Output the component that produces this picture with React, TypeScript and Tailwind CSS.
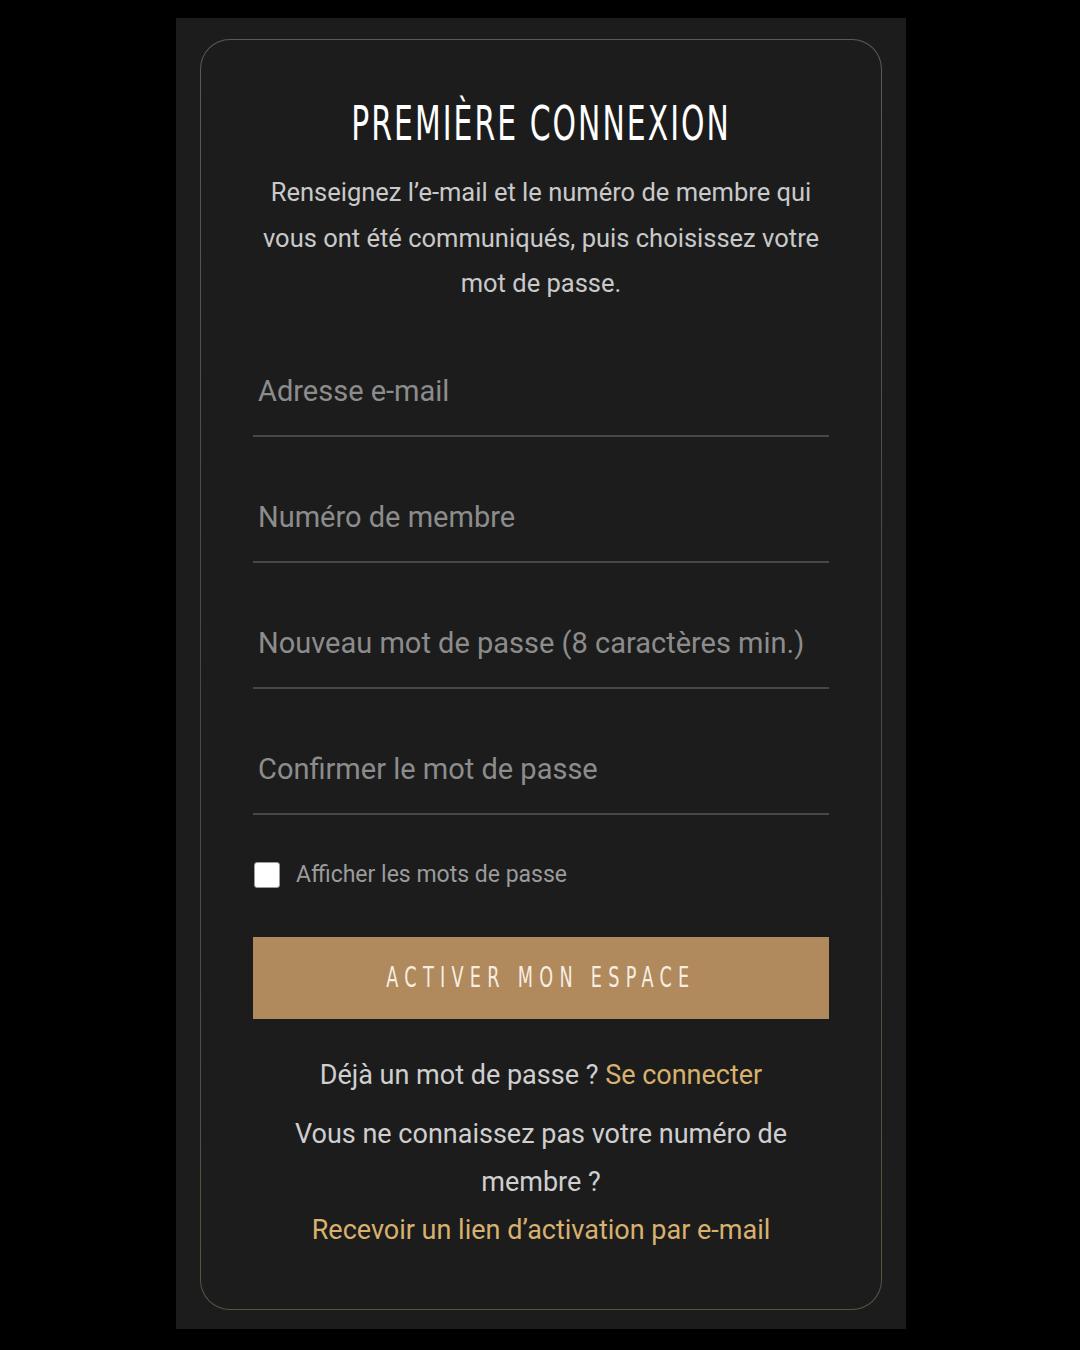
import { useState } from "react";

const body = "font-['Roboto','Liberation_Sans',sans-serif]";
const narrow = "font-['DejaVu_Sans','Roboto',sans-serif] font-stretch-condensed";

const FIELDS = [
  { type: "email", placeholder: "Adresse e-mail" },
  { type: "text", placeholder: "Numéro de membre" },
  { type: "password", placeholder: "Nouveau mot de passe (8 caractères min.)" },
  { type: "password", placeholder: "Confirmer le mot de passe" },
];

export default function App() {
  const [show, setShow] = useState(false);

  return (
    <div className={`min-h-[1350px] bg-black pt-[18px] ${body}`}>
      <div className="ml-[176px] w-[730px] bg-[#1c1c1d] pl-[24px] pr-[24px] pt-[21px] pb-[19px]">
        {/* card with a grey-to-gold border */}
        <div className="rounded-[30px] bg-gradient-to-b from-[#5a5a5a] via-[#4a4845] to-[#5c5240] p-px">
          <div className="rounded-[29px] bg-[#1c1c1d] px-[52px] pt-[55px] pb-[55px]">
            <h1 className="text-center text-[48px] leading-[56px] text-white">
              <span className={`inline-block scale-x-[0.69] tracking-[3px] whitespace-nowrap ${narrow}`}>
                PREMIÈRE CONNEXION
              </span>
            </h1>
            <p className="mt-[18px] text-center text-[25.5px] leading-[45.5px] text-[#c9c9c9]">
              Renseignez l’e-mail et le numéro de membre qui
              <br />
              vous ont été communiqués, puis choisissez votre
              <br />
              mot de passe.
            </p>

            <form className="mt-[58px] flex flex-col gap-[54px]" onSubmit={(e) => e.preventDefault()}>
              {FIELDS.map((f) => (
                <input
                  key={f.placeholder}
                  type={f.type === "password" && show ? "text" : f.type}
                  placeholder={f.placeholder}
                  className="h-[72px] w-full border-b-2 border-[#48484a] bg-transparent px-[5px] pb-[18px] text-[29px] text-[#e0e0e0] outline-none placeholder:text-[#8c8c8c]"
                />
              ))}
            </form>

            <label className="mt-[47px] flex cursor-pointer items-center gap-[16px]">
              <input
                type="checkbox"
                checked={show}
                onChange={(e) => setShow(e.target.checked)}
                className="ml-px h-[26px] w-[26px] appearance-none rounded-[3px] border border-[#9a9a9a] bg-white checked:bg-[#b0895d]"
              />
              <span className="text-[23px] leading-[26px] text-[#9b9b9b]">Afficher les mots de passe</span>
            </label>

            <button
              type="button"
              className="mt-[49px] h-[82px] w-full bg-[#b0895d] text-[28px] text-[#f6eee2]"
            >
              <span className={`inline-block scale-x-[0.7] tracking-[9px] whitespace-nowrap ${narrow}`}>
                ACTIVER MON ESPACE
              </span>
            </button>

            <p className="mt-[32px] text-center text-[27px] leading-[48px] text-[#cfcfcf]">
              Déjà un mot de passe ? <a className="text-[#d8b16e]">Se connecter</a>
            </p>
            <p className="mt-[11px] text-center text-[27px] leading-[48px] text-[#cfcfcf]">
              Vous ne connaissez pas votre numéro de
              <br />
              membre ?
              <br />
              <a className="text-[#d8b16e]">Recevoir un lien d’activation par e-mail</a>
            </p>
          </div>
        </div>
      </div>
    </div>
  );
}
